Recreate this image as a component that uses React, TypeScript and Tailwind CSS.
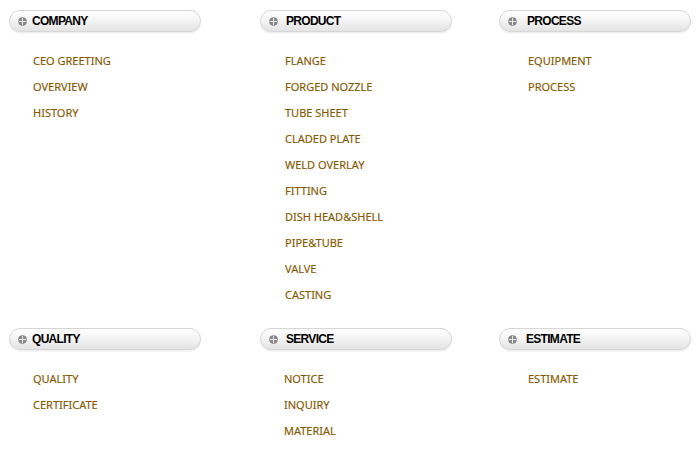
import React from "react";

type Section = { title: string; offset: string; links: string[] };

const row1: Section[] = [
  { title: "COMPANY", offset: "ml-[5px]", links: ["CEO GREETING", "OVERVIEW", "HISTORY"] },
  {
    title: "PRODUCT",
    offset: "ml-[8px]",
    links: [
      "FLANGE",
      "FORGED NOZZLE",
      "TUBE SHEET",
      "CLADED PLATE",
      "WELD OVERLAY",
      "FITTING",
      "DISH HEAD&SHELL",
      "PIPE&TUBE",
      "VALVE",
      "CASTING",
    ],
  },
  { title: "PROCESS", offset: "ml-[10px]", links: ["EQUIPMENT", "PROCESS"] },
];

const row2: Section[] = [
  { title: "QUALITY", offset: "ml-[5px]", links: ["QUALITY", "CERTIFICATE"] },
  { title: "SERVICE", offset: "ml-[8px]", links: ["NOTICE", "INQUIRY", "MATERIAL"] },
  { title: "ESTIMATE", offset: "ml-[9px]", links: ["ESTIMATE"] },
];

function Globe() {
  return (
    <svg width="9" height="9" viewBox="0 0 9 9" className="shrink-0">
      <circle cx="4.5" cy="4.5" r="4" fill="#8a8a8a" />
      <circle cx="4.5" cy="4.5" r="4" fill="none" stroke="#777" strokeWidth="0.6" />
      <line x1="0.8" y1="4.5" x2="8.2" y2="4.5" stroke="#e8e8e8" strokeWidth="1" />
      <line x1="4.5" y1="0.8" x2="4.5" y2="8.2" stroke="#e8e8e8" strokeWidth="1" />
    </svg>
  );
}

function Pill({ title, offset }: { title: string; offset: string }) {
  return (
    <div className="w-[192px] h-[22px] rounded-full border border-[#d6d6d6] shadow-[0_1px_0_#f0f0f0,0_2px_0_#f7f7f7] bg-[linear-gradient(180deg,#ffffff_0%,#f6f6f6_40%,#e4e4e4_100%)] flex items-center pl-[8px]">
      <Globe />
      <span
        className={`${offset} text-[12px] font-bold text-black tracking-[-0.7px] leading-none`}
        style={{ fontFamily: "'Liberation Sans', Arial, sans-serif" }}
      >
        {title}
      </span>
    </div>
  );
}

function Col({ s, pad }: { s: Section; pad: string }) {
  return (
    <div className="flex flex-col">
      <Pill title={s.title} offset={s.offset} />
      <ul className={`mt-[16px] ${pad} flex flex-col`}>
        {s.links.map((l) => (
          <li
            key={l}
            className="h-[26px] flex items-center text-[11px] text-[#875800] [-webkit-text-stroke:0.15px_#875800]"
            style={{ fontFamily: "'Noto Sans', 'Open Sans', sans-serif" }}
          >
            {l}
          </li>
        ))}
      </ul>
    </div>
  );
}

export default function App() {
  const pads = ["pl-[24px]", "pl-[25px]", "pl-[29px]"];
  const pads2 = ["pl-[24px]", "pl-[24px]", "pl-[29px]"];
  return (
    <div className="w-[697px] h-[450px] bg-white pl-[9px] pt-[10px]">
      <div className="grid grid-cols-[251px_239px_198px]">
        {row1.map((s, i) => (
          <Col key={s.title} s={s} pad={pads[i]} />
        ))}
      </div>
      <div className="grid grid-cols-[251px_239px_198px] mt-[20px]">
        {row2.map((s, i) => (
          <Col key={s.title} s={s} pad={pads2[i]} />
        ))}
      </div>
    </div>
  );
}
